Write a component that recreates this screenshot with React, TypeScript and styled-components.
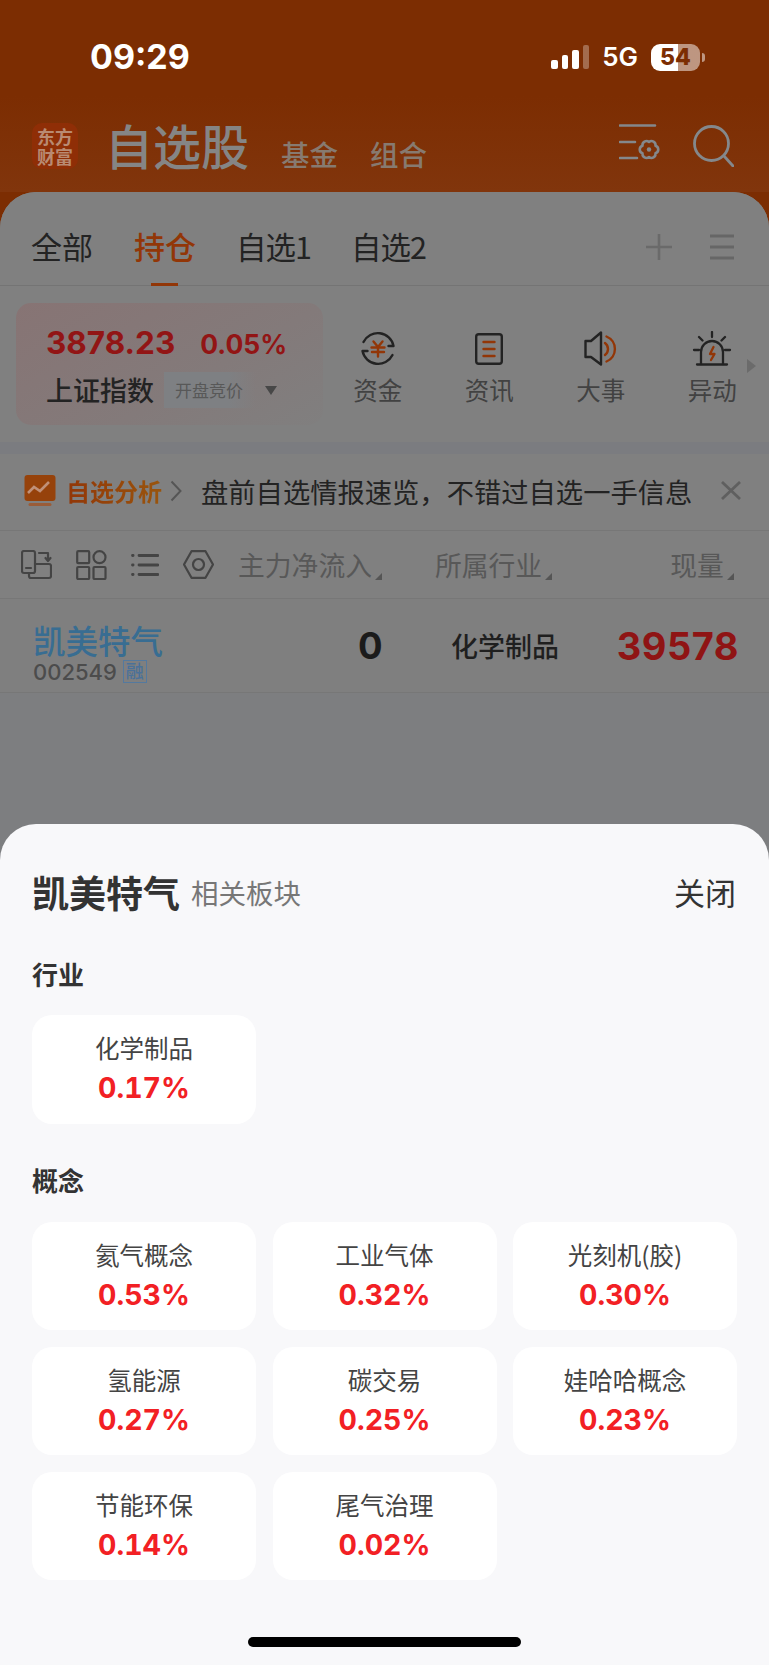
import styled, { createGlobalStyle } from "styled-components";

const CJK = `"Noto Sans CJK SC", "Noto Sans", sans-serif`;
const LATIN = `Inter, "Noto Sans CJK SC", sans-serif`;
const DARK = "#232323";
const ACCENT = "#923607";

const GlobalStyle = createGlobalStyle`
  html, body { margin: 0; padding: 0; background: #7d7e80; }
  * { box-sizing: border-box; }
`;

const Page = styled.div`
  position: relative;
  width: 769px;
  height: 1665px;
  overflow: hidden;
  display: flex;
  flex-direction: column;
  background: #7c2d02;
  font-family: ${CJK};
`;

const Header = styled.header`
  height: 192px;
  flex: none;
  background: linear-gradient(#7c2d02 0%, #7c2d02 50%, #81350c 100%);
`;

const StatusBar = styled.div`
  height: 114px;
  display: flex;
  align-items: center;
  padding: 0 69px 0 90px;
  color: #fff;
`;

const Time = styled.span`
  font-family: ${LATIN};
  font-weight: 700;
  font-size: 34px;
  line-height: 40px;
  flex: 1;
`;

const Signal = styled.div`
  display: flex;
  align-items: flex-end;
  gap: 4px;
  height: 24px;
`;

const SignalBar = styled.i<{ $h: number; $off?: boolean }>`
  display: block;
  width: 6.5px;
  height: ${(p) => p.$h}px;
  border-radius: 2px;
  background: ${(p) => (p.$off ? "rgba(255,255,255,.3)" : "#fff")};
`;

const Network = styled.span`
  font-family: ${LATIN};
  font-weight: 600;
  font-size: 26px;
  line-height: 30px;
  margin: 0 13px 0 13px;
`;

const Battery = styled.div`
  position: relative;
  width: 49px;
  height: 27px;
  border-radius: 9px;
  display: flex;
  align-items: center;
  justify-content: center;
  background: linear-gradient(90deg, #fff 55%, rgba(255, 255, 255, 0.5) 55%);
  font-family: ${LATIN};
  font-weight: 800;
  font-size: 23px;
  color: #7c2d02;
  &::after {
    content: "";
    position: absolute;
    right: -5px;
    top: 9px;
    width: 3px;
    height: 9px;
    border-radius: 0 3px 3px 0;
    background: rgba(255, 255, 255, 0.5);
  }
`;

const NavRow = styled.nav`
  display: flex;
  align-items: flex-start;
  padding: 4px 35px 0 32px;
`;

const Logo = styled.div`
  width: 46px;
  height: 46px;
  margin-top: 5px;
  border-radius: 10px;
  background: #8f2e06;
  color: #b98a72;
  font-weight: 700;
  font-size: 18px;
  line-height: 20px;
  text-align: center;
  padding-top: 3px;
`;

const Title = styled.h1`
  margin: 2px 0 0 27px;
  font-size: 48px;
  line-height: 48px;
  font-weight: 500;
  color: #858585;
`;

const SubNav = styled.span`
  font-size: 28.5px;
  line-height: 30px;
  margin: 21px 0 0 32px;
  color: #877a70;
  font-weight: 500;
`;

const NavIcons = styled.div`
  margin-left: auto;
  display: flex;
  align-items: flex-start;
  gap: 32px;
`;

const Panel = styled.main`
  flex: 1;
  display: flex;
  flex-direction: column;
  background: #7d7e80;
  border-radius: 36px 36px 0 0;
  overflow: hidden;
`;

const TabBar = styled.div`
  height: 94px;
  flex: none;
  display: flex;
  align-items: flex-start;
  gap: 41px;
  padding: 32px 35px 0 31px;
  background: #808080;
  border-bottom: 1px solid #747474;
`;

const Tab = styled.span<{ $active?: boolean; $custom?: boolean }>`
  position: relative;
  font-size: ${(p) => (p.$custom ? 30.5 : 31)}px;
  letter-spacing: ${(p) => (p.$custom ? "-1px" : "0")};
  margin-left: ${(p) => (p.$custom ? "-1px" : "0")};
  line-height: 44px;
  height: 62px;
  color: ${(p) => (p.$active ? ACCENT : DARK)};
  font-weight: ${(p) => (p.$active ? 500 : 400)};
  &::after {
    content: "";
    display: ${(p) => (p.$active ? "block" : "none")};
    position: absolute;
    left: 17px;
    bottom: 0;
    width: 27px;
    height: 3px;
    background: ${ACCENT};
  }
`;

const TabActions = styled.div`
  margin-left: auto;
  display: flex;
  gap: 38px;
  padding-top: 10px;
`;

const IndexRow = styled.section`
  position: relative;
  height: 156px;
  flex: none;
  display: flex;
  padding: 17px 0 0 16px;
  background: #808080;
`;

const IndexCard = styled.div`
  width: 307px;
  height: 122px;
  flex: none;
  border-radius: 15px;
  padding: 23px 0 0 30px;
  background: linear-gradient(150deg, #877474 0%, #837a7a 60%, #807f7f 100%);
`;

const PriceLine = styled.div`
  display: flex;
  align-items: baseline;
  gap: 25px;
  font-family: ${LATIN};
  font-weight: 700;
  color: #921515;
  line-height: 34px;
`;

const Price = styled.span`
  font-size: 31.5px;
`;

const PriceChange = styled.span`
  font-size: 26.5px;
`;

const IndexName = styled.div`
  display: flex;
  align-items: center;
  margin-top: 11px;
  font-size: 27px;
  line-height: 36px;
  font-weight: 500;
  color: ${DARK};
`;

const AuctionChip = styled.span`
  width: 92px;
  height: 36px;
  margin-left: 10px;
  background: linear-gradient(90deg, #7e8083 70%, rgba(126, 128, 131, 0));
  font-size: 17px;
  font-weight: 400;
  line-height: 36px;
  padding-left: 11px;
  color: #585858;
`;

const CaretDown = styled.i`
  width: 0;
  height: 0;
  margin-left: 9px;
  border-style: solid;
  border-width: 9px 6px 0 6px;
  border-color: #474747 transparent transparent transparent;
`;

const Shortcuts = styled.div`
  flex: 1;
  display: grid;
  grid-template-columns: repeat(4, 111.5px);
  margin-left: -1px;
  padding-top: 28px;
`;

const Shortcut = styled.div`
  display: flex;
  flex-direction: column;
  align-items: center;
  height: 90px;
  gap: 10px;
  font-size: 24.5px;
  line-height: 28px;
  color: #424242;
`;

const ShortcutIcon = styled.div`
  height: 35px;
  display: flex;
  align-items: center;
`;

const MoreArrow = styled.i`
  position: absolute;
  right: 13px;
  top: 73px;
  width: 0;
  height: 0;
  border-style: solid;
  border-width: 7px 0 7px 9px;
  border-color: transparent transparent transparent #6b6b6b;
`;

const Banner = styled.section`
  height: 89px;
  flex: none;
  display: flex;
  align-items: center;
  padding: 0 24px 3px 24px;
  background: #808080;
  border-top: 12px solid #7b7c80;
  border-bottom: 1px solid #777;
`;

const BannerBrand = styled.span`
  margin-left: 10px;
  font-size: 24px;
  font-weight: 700;
  background: linear-gradient(90deg, #923607, #99550d);
  -webkit-background-clip: text;
  background-clip: text;
  color: transparent;
`;

const BannerText = styled.span`
  margin-left: 19px;
  font-size: 27.3px;
  line-height: 36px;
  color: ${DARK};
  white-space: nowrap;
`;

const SortRow = styled.div`
  height: 68px;
  flex: none;
  display: flex;
  align-items: center;
  padding-left: 21px;
  background: #808080;
  border-bottom: 1px solid #777;
`;

const SortTools = styled.div`
  width: 217px;
  display: flex;
  align-items: center;
  gap: 24px;
`;

const SortLabel = styled.span<{ $gap?: number }>`
  position: relative;
  margin-left: ${(p) => p.$gap ?? 0}px;
  font-size: 26.8px;
  line-height: 36px;
  color: #585858;
  white-space: nowrap;
  &::after {
    content: "";
    position: absolute;
    left: 100%;
    margin-left: 3px;
    bottom: 3px;
    border-style: solid;
    border-width: 0 0 7px 7px;
    border-color: transparent transparent #555 transparent;
  }
`;

const StockRow = styled.div`
  height: 94px;
  flex: none;
  display: flex;
  padding: 0 30px 0 33px;
  background: #7f7f7f;
  border-bottom: 1px solid #777;
`;

const StockName = styled.div`
  width: 325px;
  padding-top: 21px;
`;

const StockTitle = styled.div`
  font-size: 32.5px;
  line-height: 40px;
  font-weight: 500;
  color: #386d92;
`;

const StockCode = styled.div`
  display: flex;
  align-items: center;
  gap: 6px;
  font-family: ${LATIN};
  font-size: 22px;
  font-weight: 500;
  line-height: 22px;
  color: #4c4c4c;
`;

const MarginTag = styled.span`
  flex: none;
  width: 24px;
  height: 23px;
  border: 1.5px solid #54799e;
  color: #4a7199;
  font-family: ${CJK};
  font-size: 18px;
  line-height: 19px;
  text-align: center;
`;

const StockFlow = styled.span`
  width: 93px;
  font-family: ${LATIN};
  font-size: 36.5px;
  font-weight: 700;
  line-height: 94px;
  color: #1b1b1b;
`;

const StockSector = styled.span`
  font-size: 27px;
  font-weight: 500;
  line-height: 94px;
  color: #1f1f1f;
`;

const StockVolume = styled.span`
  margin-left: auto;
  font-family: ${LATIN};
  font-size: 38px;
  letter-spacing: 0.5px;
  font-weight: 700;
  line-height: 94px;
  color: #8f1414;
`;

const Sheet = styled.aside`
  position: absolute;
  left: 0;
  right: 0;
  bottom: 0;
  height: 841px;
  padding: 0 32px;
  border-radius: 36px 36px 0 0;
  background: #f8f8fa;
`;

const SheetHead = styled.div`
  height: 132px;
  display: flex;
  align-items: flex-start;
  padding-top: 45px;
`;

const SheetTitle = styled.h2`
  margin: 0;
  font-size: 37px;
  line-height: 46px;
  font-weight: 700;
  color: #333;
`;

const SheetSubtitle = styled.span`
  margin-left: 11px;
  font-size: 27.5px;
  line-height: 46px;
  color: #777;
`;

const SheetClose = styled.span`
  margin: 0 1px 0 auto;
  font-size: 31px;
  line-height: 46px;
  color: #333;
`;

const GroupTitle = styled.h3<{ $h: number }>`
  margin: 0;
  height: ${(p) => p.$h}px;
  font-size: 26px;
  line-height: 36px;
  font-weight: 700;
  color: #333;
`;

const SectorGrid = styled.div`
  display: grid;
  grid-template-columns: repeat(3, 224px);
  grid-auto-rows: 108.5px;
  column-gap: 16.5px;
  row-gap: 16.5px;
  margin-bottom: 38px;
`;

const SectorCard = styled.div`
  display: flex;
  flex-direction: column;
  align-items: center;
  padding-top: 16px;
  border-radius: 20px;
  background: #fff;
`;

const SectorName = styled.span`
  font-size: 24.5px;
  line-height: 34px;
  color: #444;
`;

const SectorChange = styled.span`
  margin-top: 3px;
  font-family: ${LATIN};
  font-size: 28.5px;
  font-weight: 700;
  font-variant-numeric: tabular-nums;
  line-height: 40px;
  color: #f22024;
`;

const HomeBar = styled.i`
  position: absolute;
  left: 248px;
  bottom: 18px;
  width: 273px;
  height: 10px;
  border-radius: 5px;
  background: #000;
`;

const stroke = { fill: "none", strokeLinecap: "round", strokeLinejoin: "round" } as const;

const FilterIcon = () => (
  <svg width="42" height="37" viewBox="0 0 42 37" style={{ marginTop: 6 }} {...stroke} stroke="#84888c" strokeWidth="2.6">
    <path d="M1 1.5h35M1 18h15M1 34h17" />
    <path d="M36.500 21.700A4 4 0 0 1 36.500 29.300A4 4 0 0 1 30 33A4 4 0 0 1 23.500 29.300A4 4 0 0 1 23.500 21.700A4 4 0 0 1 30 18A4 4 0 0 1 36.500 21.700z" />
    <circle cx="30" cy="25.500" r="2.200" fill="#84888c" stroke="none" />
  </svg>
);

const SearchIcon = () => (
  <svg width="41" height="42" viewBox="0 0 41 42" style={{ marginTop: 7 }} {...stroke} stroke="#84888c" strokeWidth="2.8">
    <circle cx="18.500" cy="18.500" r="17" />
    <path d="M31 31l9 10" />
  </svg>
);

const PlusIcon = () => (
  <svg width="26" height="26" viewBox="0 0 26 26" stroke="#6a6a6a" strokeWidth="2.600">
    <path d="M0 13h26M13 0v26" />
  </svg>
);

const MenuIcon = () => (
  <svg width="24" height="26" viewBox="0 0 24 26" stroke="#666" strokeWidth="3">
    <path d="M0 2h24M0 13h24M0 24h24" />
  </svg>
);

const FundsIcon = () => (
  <svg width="36" height="35" viewBox="0 0 36 35" {...stroke} strokeWidth="2.400">
    <path d="M3.500 11A16 16 0 0 1 33.500 15H28.500" stroke={DARK} />
    <path d="M32.500 24A16 16 0 0 1 2.500 20H7.500" stroke={DARK} />
    <path d="M13.500 10.500L18 16l4.500-5.500M11.500 16.500h13M12 21h12M18 16v9.500" stroke={ACCENT} />
  </svg>
);

const NewsIcon = () => (
  <svg width="28" height="32" viewBox="0 0 28 32" {...stroke} strokeWidth="2.400">
    <rect x="1.200" y="1.200" width="25.600" height="29.600" rx="2.500" stroke={DARK} />
    <path d="M8.500 9h11M8.500 16h11M8.500 23h11" stroke={ACCENT} />
  </svg>
);

const EventIcon = () => (
  <svg width="34" height="35" viewBox="0 0 34 35" {...stroke} strokeWidth="2.400">
    <path d="M17 1.500v32L7 26H1.500V10H7z" stroke={DARK} />
    <path d="M21 12a7.500 7.500 0 0 1 0 12" stroke={ACCENT} />
    <path d="M22.500 5.500a13.500 13.500 0 0 1 0 25" stroke={ACCENT} />
  </svg>
);

const AlertIcon = () => (
  <svg width="40" height="35" viewBox="0 0 40 35" {...stroke} strokeWidth="2.300">
    <path d="M20 1v5M7 6l3.500 3.500M33 6l-3.500 3.500M2 19h5M33 19h5M5 33.500h30" stroke={DARK} />
    <path d="M9 33V21a11 11 0 0 1 22 0v12" stroke={DARK} />
    <path d="M21.500 16l-3.500 7h4.500l-3.500 6" stroke={ACCENT} />
  </svg>
);

const AnalysisIcon = () => (
  <svg width="32" height="31" viewBox="0 0 32 31" style={{ flex: "none" }}>
    <rect x="0.500" width="31" height="26" rx="3" fill="#96420b" />
    <path d="M4 18l6-6 6 4 9-9" fill="none" stroke="#c09078" strokeWidth="2.600" />
    <rect x="4.500" y="28" width="23" height="3" rx="1.500" fill="#9a5c38" />
  </svg>
);

const ChevronIcon = () => (
  <svg width="12" height="22" viewBox="0 0 12 22" fill="none" stroke="#555" strokeWidth="2" style={{ flex: "none", marginLeft: 8 }}>
    <path d="M1.500 1.500L10.500 11l-9 9.500" />
  </svg>
);

const CloseIcon = () => (
  <svg width="20" height="19" viewBox="0 0 20 19" fill="none" stroke="#5f5f5f" strokeWidth="2.800" style={{ flex: "none", marginLeft: 29 }}>
    <path d="M1 1l18 17M19 1L1 18" />
  </svg>
);

const toolStroke = { fill: "none", stroke: "#444", strokeWidth: 2.2, strokeLinejoin: "round", strokeLinecap: "round" } as const;

const DevicesIcon = () => (
  <svg width="31" height="30" viewBox="0 0 31 30" {...toolStroke}>
    <rect x="1" y="1" width="13" height="22" rx="2" />
    <path d="M5 18h5" />
    <path d="M18 3h9v7M24.500 8l2.500 3 2.500-3" />
    <path d="M14 14h14a2 2 0 0 1 2 2v10a2 2 0 0 1-2 2H10a2 2 0 0 1-2-2v-3" />
  </svg>
);

const GridIcon = () => (
  <svg width="31" height="30" viewBox="0 0 31 30" {...toolStroke}>
    <rect x="1.200" y="1.200" width="12" height="12" rx="1" />
    <circle cx="23.500" cy="7.200" r="6" />
    <rect x="1.200" y="17" width="12" height="12" rx="1" />
    <rect x="17.500" y="17" width="12" height="12" rx="1" />
  </svg>
);

const ListIcon = () => (
  <svg width="28" height="24" viewBox="0 0 28 24" {...toolStroke} strokeWidth="2.800">
    <path d="M8 2.500h19M8 12h19M8 21.500h19M1.500 2.500h.6M1.500 12h.6M1.500 21.500h.6" />
  </svg>
);

const NutIcon = () => (
  <svg width="31" height="29" viewBox="0 0 31 29" {...toolStroke}>
    <path d="M8.500 1.200h14L30 14.500l-7.500 13.300h-14L1 14.500z" />
    <circle cx="15.500" cy="14.500" r="5.500" />
  </svg>
);

const concepts = [
  ["氦气概念", "0.53%"],
  ["工业气体", "0.32%"],
  ["光刻机(胶)", "0.30%"],
  ["氢能源", "0.27%"],
  ["碳交易", "0.25%"],
  ["娃哈哈概念", "0.23%"],
  ["节能环保", "0.14%"],
  ["尾气治理", "0.02%"],
];

export default function App() {
  return (
    <>
      <GlobalStyle />
      <Page>
        <Header>
          <StatusBar>
            <Time>09:29</Time>
            <Signal>
              <SignalBar $h={9} />
              <SignalBar $h={14} />
              <SignalBar $h={19} />
              <SignalBar $h={24} $off />
            </Signal>
            <Network>5G</Network>
            <Battery>54</Battery>
          </StatusBar>
          <NavRow>
            <Logo>
              东方
              <br />
              财富
            </Logo>
            <Title>自选股</Title>
            <SubNav>基金</SubNav>
            <SubNav>组合</SubNav>
            <NavIcons>
              <FilterIcon />
              <SearchIcon />
            </NavIcons>
          </NavRow>
        </Header>

        <Panel>
          <TabBar>
            <Tab>全部</Tab>
            <Tab $active>持仓</Tab>
            <Tab $custom>自选1</Tab>
            <Tab $custom>自选2</Tab>
            <TabActions>
              <PlusIcon />
              <MenuIcon />
            </TabActions>
          </TabBar>

          <IndexRow>
            <IndexCard>
              <PriceLine>
                <Price>3878.23</Price>
                <PriceChange>0.05%</PriceChange>
              </PriceLine>
              <IndexName>
                上证指数
                <AuctionChip>开盘竞价</AuctionChip>
                <CaretDown />
              </IndexName>
            </IndexCard>
            <Shortcuts>
              <Shortcut>
                <ShortcutIcon><FundsIcon /></ShortcutIcon>
                资金
              </Shortcut>
              <Shortcut>
                <ShortcutIcon><NewsIcon /></ShortcutIcon>
                资讯
              </Shortcut>
              <Shortcut>
                <ShortcutIcon><EventIcon /></ShortcutIcon>
                大事
              </Shortcut>
              <Shortcut>
                <ShortcutIcon><AlertIcon /></ShortcutIcon>
                异动
              </Shortcut>
            </Shortcuts>
            <MoreArrow />
          </IndexRow>

          <Banner>
            <AnalysisIcon />
            <BannerBrand>自选分析</BannerBrand>
            <ChevronIcon />
            <BannerText>{"盘前自选情报速览\uFF0C不错过自选一手信息"}</BannerText>
            <CloseIcon />
          </Banner>

          <SortRow>
            <SortTools>
              <DevicesIcon />
              <GridIcon />
              <ListIcon />
              <NutIcon />
            </SortTools>
            <SortLabel>主力净流入</SortLabel>
            <SortLabel $gap={63}>所属行业</SortLabel>
            <SortLabel $gap={128}>现量</SortLabel>
          </SortRow>

          <StockRow>
            <StockName>
              <StockTitle>凯美特气</StockTitle>
              <StockCode>
                002549
                <MarginTag>融</MarginTag>
              </StockCode>
            </StockName>
            <StockFlow>0</StockFlow>
            <StockSector>化学制品</StockSector>
            <StockVolume>39578</StockVolume>
          </StockRow>
        </Panel>

        <Sheet>
          <SheetHead>
            <SheetTitle>凯美特气</SheetTitle>
            <SheetSubtitle>相关板块</SheetSubtitle>
            <SheetClose>关闭</SheetClose>
          </SheetHead>
          <GroupTitle $h={59}>行业</GroupTitle>
          <SectorGrid>
            <SectorCard>
              <SectorName>化学制品</SectorName>
              <SectorChange>0.17%</SectorChange>
            </SectorCard>
          </SectorGrid>
          <GroupTitle $h={60}>概念</GroupTitle>
          <SectorGrid>
            {concepts.map(([name, change]) => (
              <SectorCard key={name}>
                <SectorName>{name}</SectorName>
                <SectorChange>{change}</SectorChange>
              </SectorCard>
            ))}
          </SectorGrid>
          <HomeBar />
        </Sheet>
      </Page>
    </>
  );
}
